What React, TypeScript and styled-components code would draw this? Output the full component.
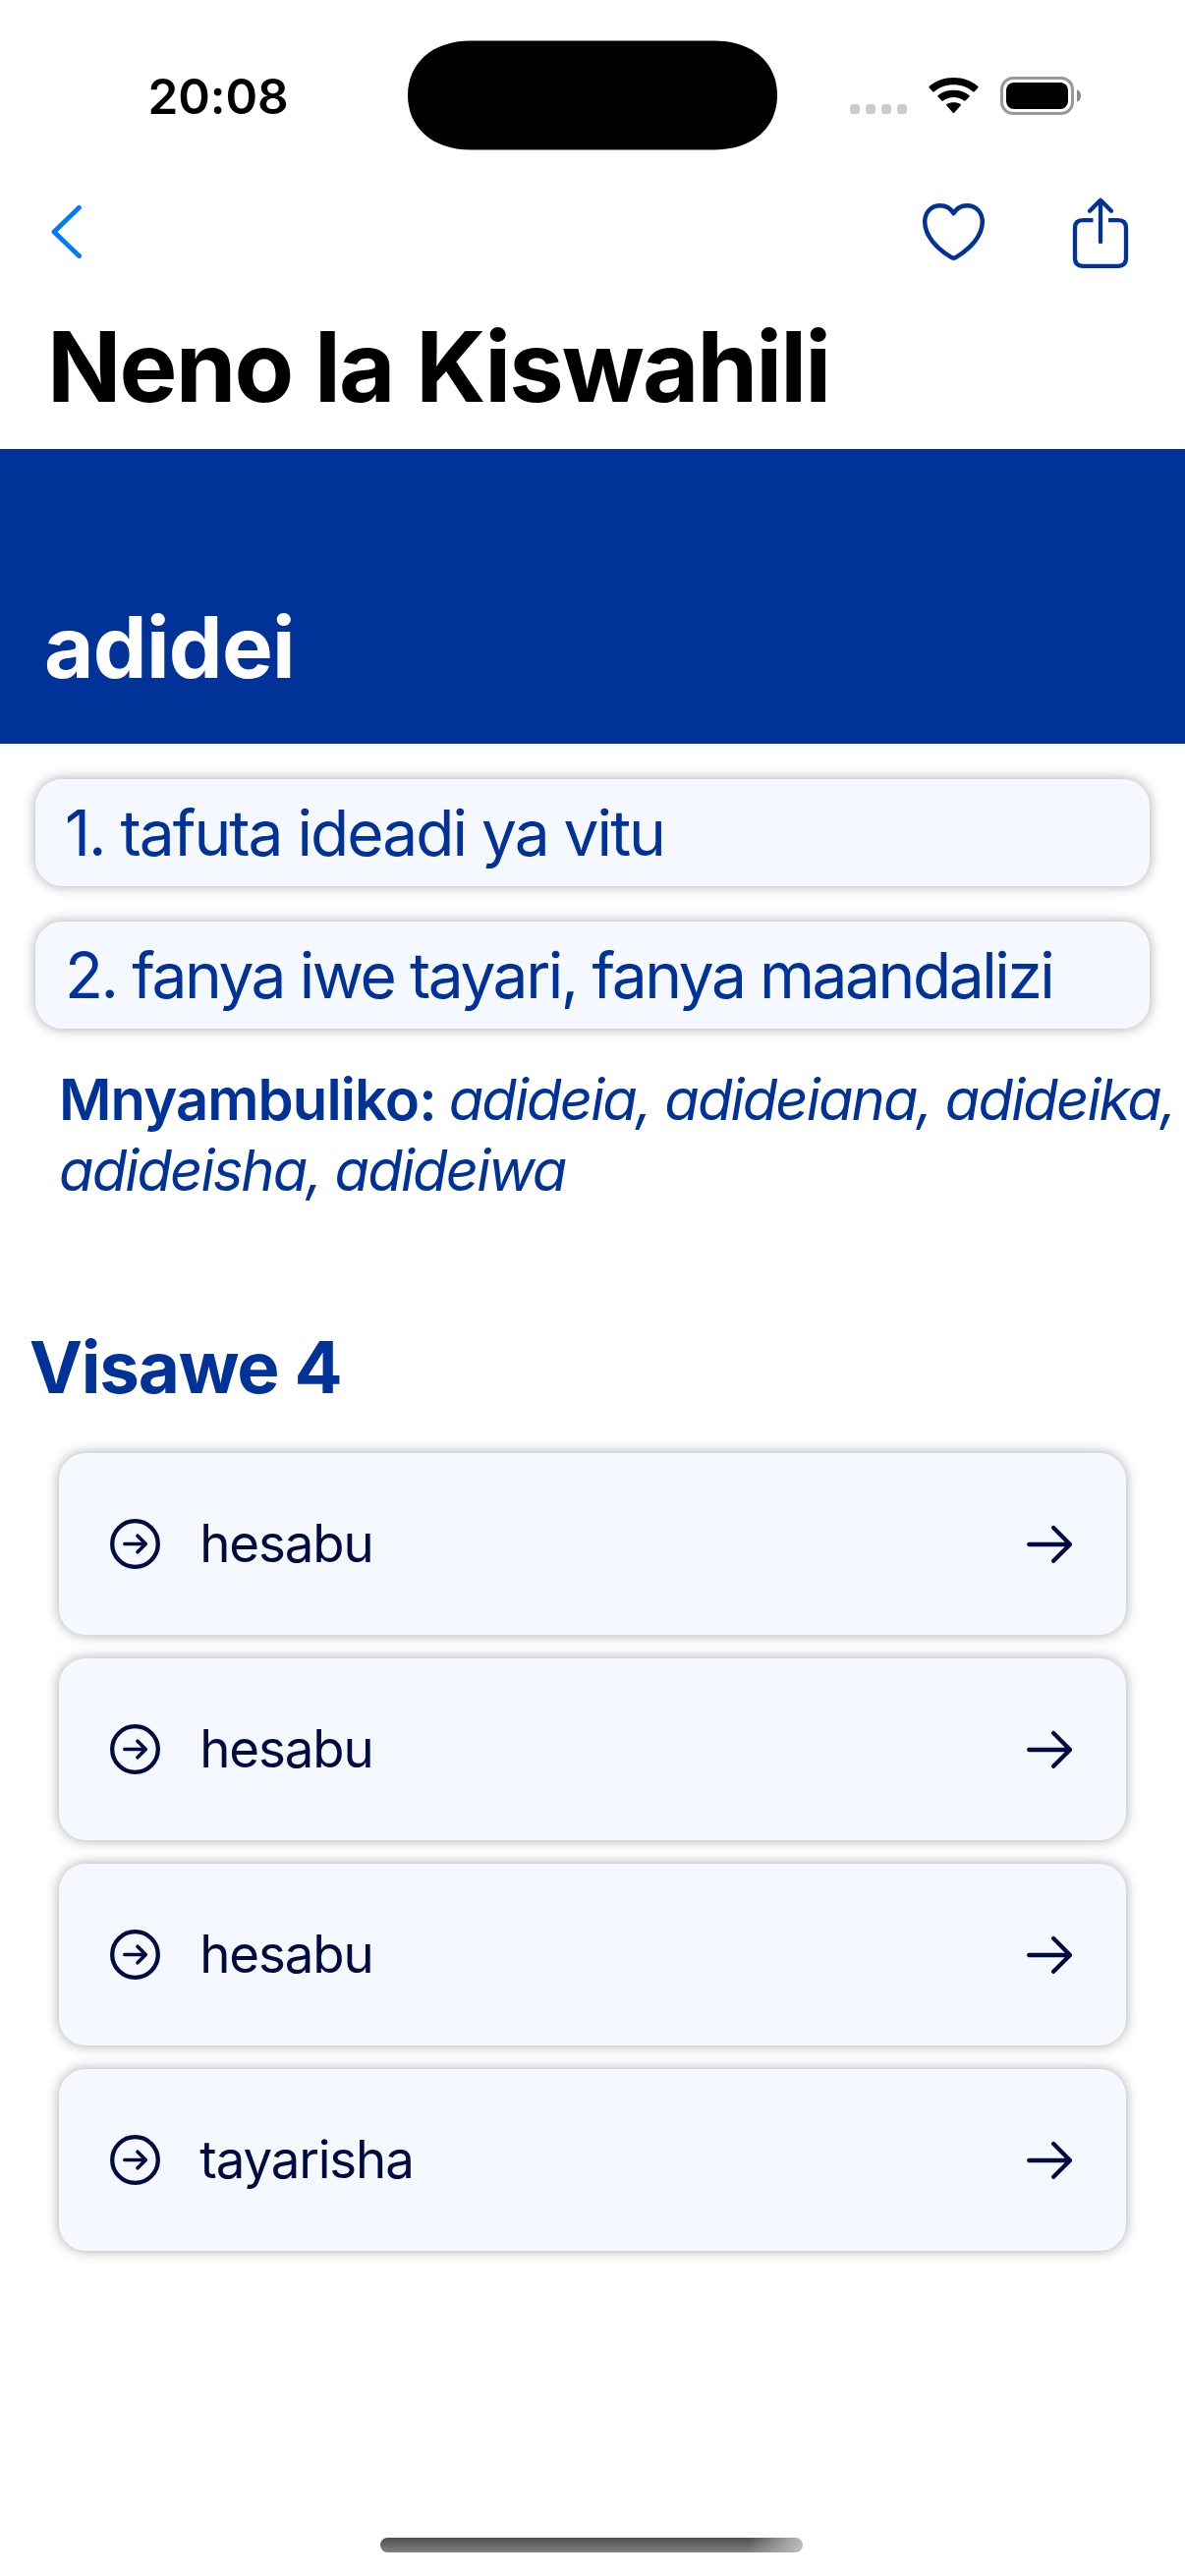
import React, { Fragment } from "react";
import styled, { createGlobalStyle } from "styled-components";

const BLUE = "#003297";
const NAVY = "#000c40";
const CARD = "#f5f8ff";

const GlobalStyle = createGlobalStyle`
  * { box-sizing: border-box; }
  body {
    margin: 0;
    background: #fff;
    font-family: Inter, "Liberation Sans", sans-serif;
  }
  h1, h2, p, ul, ol { margin: 0; padding: 0; }
  ul, ol { list-style: none; }
`;

const Screen = styled.div`
  display: flex;
  flex-direction: column;
  width: 1206px;
  height: 2622px;
  overflow: hidden;
  background: #fff;
`;

const StatusBar = styled.div`
  display: grid;
  grid-template-columns: 415px 376px 1fr;
  align-items: center;
  height: 194px;
  flex: none;
`;

const Clock = styled.span`
  padding: 2px 0 0 150.5px;
  font-size: 49.5px;
  font-weight: 600;
  letter-spacing: -0.1px;
  color: #000;
`;

const StatusIcons = styled.div`
  display: flex;
  align-items: center;
  gap: 22px;
  padding-left: 74px;
`;

const Icon = styled.svg`
  display: block;
  flex: none;
`;

const NavBar = styled.nav`
  display: flex;
  align-items: center;
  height: 84px;
  flex: none;
  padding: 0 54px 0 49px;
`;

const NavButton = styled.button<{ $push?: boolean; $gap?: number }>`
  display: block;
  padding: 0;
  border: 0;
  background: none;
  margin-left: ${(p) => (p.$push ? "auto" : `${p.$gap ?? 0}px`)};
`;

const Title = styled.h1`
  height: 179px;
  flex: none;
  padding: 35px 0 0 48px;
  font-size: 99px;
  line-height: 120px;
  font-weight: 700;
  letter-spacing: -1.85px;
  word-spacing: 1px;
  color: #000;
`;

const Banner = styled.section`
  display: flex;
  align-items: flex-end;
  height: 300px;
  flex: none;
  padding: 0 45px 47.7px;
  background: ${BLUE};
`;

const Headword = styled.h2`
  font-size: 87px;
  line-height: 100px;
  font-weight: 700;
  letter-spacing: -0.72px;
  color: #fff;
`;

const Meanings = styled.ol`
  display: flex;
  flex-direction: column;
  gap: 35.7px;
  padding: 35.8px 36px 0;
`;

const Card = styled.li`
  display: flex;
  align-items: center;
  border-radius: 27px;
  background: ${CARD};
  box-shadow: 0 0 13px rgba(0, 0, 0, 0.34);
`;

const Meaning = styled(Card)<{ $spacing: number }>`
  height: 109.3px;
  padding-left: 30px;
  font-size: 64px;
  font-weight: 410;
  white-space: nowrap;
  letter-spacing: ${(p) => p.$spacing}px;
  color: ${BLUE};
`;

const Conjugation = styled.p`
  margin-top: 36px;
  padding-left: 60px;
  font-size: 58px;
  line-height: 72px;
  letter-spacing: -1.92px;
  color: ${BLUE};
`;

const Label = styled.strong`
  margin-right: -1.5px;
  font-weight: 600;
  letter-spacing: -0.92px;
`;

const SectionTitle = styled.h2`
  margin-top: 119.6px;
  padding-left: 29.7px;
  font-size: 72.7px;
  line-height: 90px;
  font-weight: 700;
  letter-spacing: -1.2px;
  color: ${BLUE};
`;

const Synonyms = styled.ul`
  display: flex;
  flex-direction: column;
  gap: 24px;
  padding: 42.3px 60px 0;
`;

const Synonym = styled(Card)`
  height: 185px;
  padding: 0 55px 0 52px;
  color: ${NAVY};
`;

const SynonymWord = styled.span`
  flex: 1;
  padding-left: 40.3px;
  font-size: 52.8px;
  letter-spacing: -1.15px;
`;

const HomeIndicator = styled.div`
  align-self: center;
  flex: none;
  width: 430px;
  height: 15px;
  margin: auto 2px 24px 0;
  border-radius: 8px;
  background:
    linear-gradient(100deg, rgba(190, 190, 190, 0) 87%, rgba(190, 190, 190, 0.95) 99%),
    linear-gradient(#4f4f4f, #808080);
`;

const meanings = [
  { text: "1. tafuta ideadi ya vitu", spacing: -1.98 },
  { text: "2. fanya iwe tayari, fanya maandalizi", spacing: -2.43 },
];

const forms = ["adideia,", "adideiana,", "adideika,", "adideisha,", "adideiwa"];

const synonyms = ["hesabu", "hesabu", "hesabu", "tayarisha"];

const Island = () => (
  <Icon width="376" height="112" viewBox="0 0 376 112">
    <path d="M64 .5H312C352 .5 376 24 376 56S352 111.500 312 111.500H64C24 111.500 0 88 0 56S24 .5 64 .5Z" />
  </Icon>
);

const CellularIcon = () => (
  <Icon width="58" height="40" viewBox="0 0 58 40" fill="#cbcbcb">
    {[0, 16, 32, 48].map((x) => (
      <rect key={x} x={x} y="29" width="10" height="10" rx="3.6" />
    ))}
  </Icon>
);

const WifiIcon = () => (
  <Icon width="51" height="40" viewBox="0 0 51 40">
    <path d="M.8 12.4Q0 11.6.8 10.800C7.600 5 16 2 25.500 2S43.400 5 50.200 10.800Q51 11.600 50.200 12.400L46.700 16.300Q46 17 45.200 16.300C39.800 11.800 33 9.300 25.500 9.300S11.200 11.800 5.800 16.300Q5 17 4.300 16.300Z" />
    <path d="M9.600 21.400Q8.800 20.600 9.600 19.900C14 16.600 19.400 14.800 25.500 14.800S37 16.600 41.400 19.900Q42.200 20.600 41.400 21.400L37.600 25.400Q36.900 26.100 36.100 25.500C33 23.200 29.500 21.900 25.500 21.900S18 23.200 14.900 25.500Q14.100 26.100 13.400 25.400Z" />
    <path d="M18.400 30.500Q17.600 29.700 18.400 29C20.200 27.900 22.700 27.300 25.500 27.300S30.800 27.900 32.600 29Q33.400 29.700 32.600 30.500L26.200 37.700Q25.500 38.400 24.800 37.700Z" />
  </Icon>
);

const BatteryIcon = () => (
  <Icon width="82" height="40" viewBox="0 0 82 40">
    <rect x="1.500" y="2.500" width="72" height="36" rx="11.500" fill="none" stroke="#999" strokeWidth="3" />
    <rect x="6" y="7" width="63" height="27" rx="8" />
    <path d="M78 14.200Q82 15.800 82 20.500T78 26.800Z" fill="#888" />
  </Icon>
);

const BackIcon = () => (
  <Icon width="38" height="74" viewBox="0 0 38 74" fill="none" stroke="#007aff" strokeWidth="4.800" strokeLinecap="round" strokeLinejoin="round">
    <path d="M31.500 12.300 6 37l25.500 24.500" />
  </Icon>
);

const HeartIcon = () => (
  <Icon width="65" height="74" viewBox="0 0 65 74" fill="none" stroke={BLUE} strokeWidth="4.500" strokeLinejoin="round">
    <path d="M32.500 18.200C29.500 13 24.800 10.300 19 10.300 9.500 10.300 3.200 17.400 3.200 26.800 3.200 41 15.500 54 29.700 62.700Q32.500 64.500 35.300 62.700C49.500 54 61.800 41 61.800 26.800 61.800 17.400 55.500 10.300 46 10.300 40.200 10.300 35.500 13 32.500 18.200Z" />
  </Icon>
);

const ShareIcon = () => (
  <Icon width="62" height="74" viewBox="0 0 62 74" fill="none" stroke={BLUE} strokeWidth="4.300" strokeLinecap="round" strokeLinejoin="round">
    <path d="M22.500 25.200H12Q4 25.200 4 33.200V63.800Q4 71.800 12 71.800H48Q56 71.800 56 63.800V33.200Q56 25.200 48 25.200H38" strokeLinecap="butt" />
    <path d="M30 47.200V5M19 15.800 30 4.800 41 15.800" />
  </Icon>
);

const CircleArrowIcon = () => (
  <Icon width="51" height="51" viewBox="0 0 51 51" fill="none" stroke={NAVY} strokeLinecap="round" strokeLinejoin="round">
    <circle cx="25.500" cy="25.500" r="23.300" strokeWidth="4.300" />
    <path d="M14.800 25.500H36M28 17.200 36.300 25.500 28 33.800" strokeWidth="3.600" />
  </Icon>
);

const ArrowIcon = () => (
  <Icon width="46" height="40" viewBox="0 0 46 40" fill="none" stroke={NAVY} strokeWidth="4.300" strokeLinecap="round" strokeLinejoin="round">
    <path d="M2.200 21H43.500M27.200 4.100 44 21 27.200 37.800" />
  </Icon>
);

export default function App() {
  return (
    <Screen>
      <GlobalStyle />
      <StatusBar>
        <Clock>20:08</Clock>
        <Island />
        <StatusIcons>
          <CellularIcon />
          <WifiIcon />
          <BatteryIcon />
        </StatusIcons>
      </StatusBar>
      <NavBar>
        <NavButton aria-label="Rudi">
          <BackIcon />
        </NavButton>
        <NavButton $push aria-label="Penda">
          <HeartIcon />
        </NavButton>
        <NavButton $gap={87} aria-label="Shiriki">
          <ShareIcon />
        </NavButton>
      </NavBar>
      <Title>Neno la Kiswahili</Title>
      <Banner>
        <Headword>adidei</Headword>
      </Banner>
      <Meanings>
        {meanings.map((m) => (
          <Meaning key={m.text} $spacing={m.spacing}>
            {m.text}
          </Meaning>
        ))}
      </Meanings>
      <Conjugation>
        <Label>Mnyambuliko:</Label>
        {forms.map((form) => (
          <Fragment key={form}>
            {" "}
            <em>{form}</em>
          </Fragment>
        ))}
      </Conjugation>
      <SectionTitle>Visawe 4</SectionTitle>
      <Synonyms>
        {synonyms.map((word, i) => (
          <Synonym key={i}>
            <CircleArrowIcon />
            <SynonymWord>{word}</SynonymWord>
            <ArrowIcon />
          </Synonym>
        ))}
      </Synonyms>
      <HomeIndicator />
    </Screen>
  );
}
